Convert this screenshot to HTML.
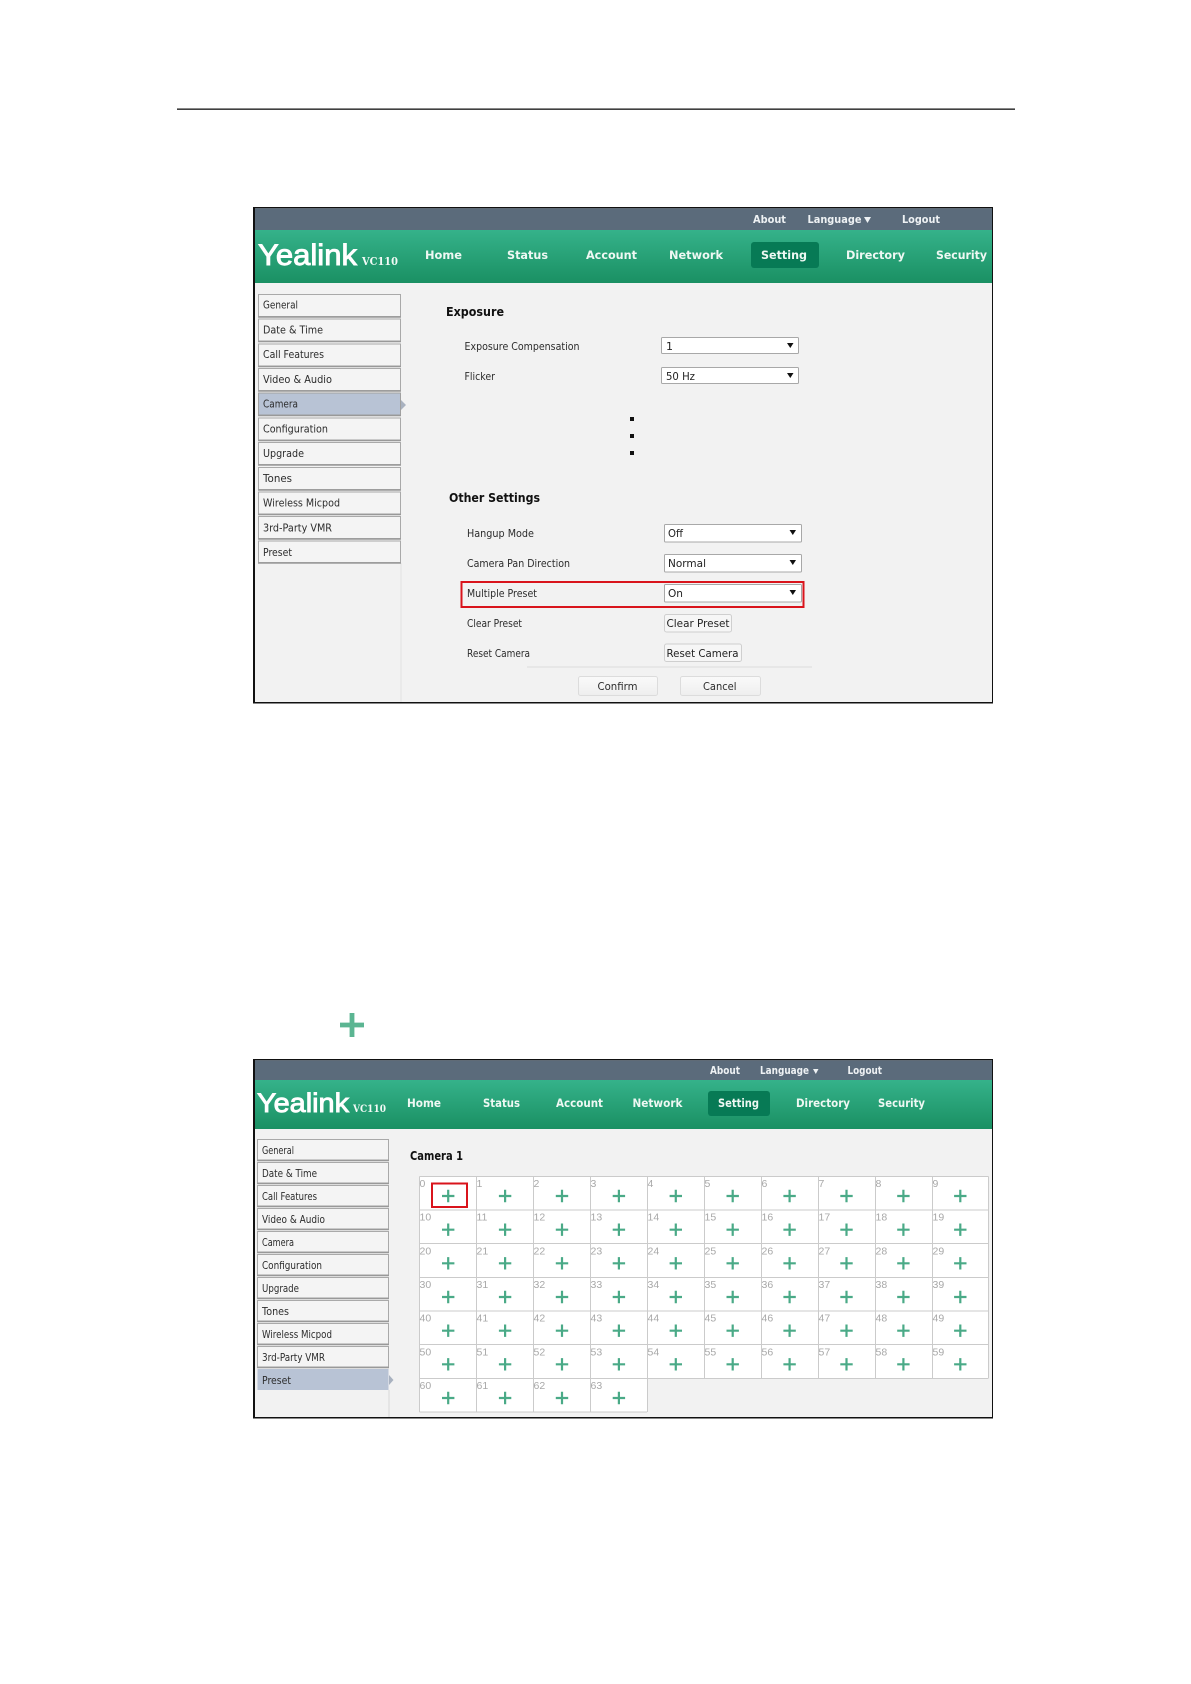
<!DOCTYPE html>
<html lang="en"><head><meta charset="utf-8"><title>Yealink VC110 Multiple Preset</title>
<style>
html,body{margin:0;padding:0;background:#fff;width:1191px;height:1684px;overflow:hidden}
svg{display:block}
text{font-family:"DejaVu Sans","Liberation Sans",sans-serif}
.m{font-size:10.5px;fill:#2c2c2c}
.h{font-size:12px;font-weight:bold;fill:#111}
.n{font-size:11.5px;font-weight:bold;fill:#eef8f3}
.t{font-size:10.5px;font-weight:bold;fill:#eef2f4}
.s{font-size:11px;fill:#222}
.g{font-family:"Liberation Sans",sans-serif;font-size:10.5px;fill:#a8a8a8}
.y{font-family:"Liberation Sans",sans-serif;fill:#fff;stroke:#fff;stroke-width:.9}
.v{font-family:"DejaVu Serif","Liberation Serif",serif;font-weight:bold;fill:#f2faf6}
.c{fill:#f4f4f4;stroke:#a9a9a9;stroke-width:1}
</style></head><body>
<svg xmlns="http://www.w3.org/2000/svg" width="1191" height="1684" viewBox="0 0 1191 1684">
<defs>
<linearGradient id="gr" x1="0" y1="0" x2="0" y2="1"><stop offset="0" stop-color="#35b28a"/><stop offset="1" stop-color="#1a9063"/></linearGradient>
<linearGradient id="bt" x1="0" y1="0" x2="0" y2="1"><stop offset="0" stop-color="#fafafa"/><stop offset="1" stop-color="#eeeeee"/></linearGradient>
<path id="p" d="M-1.1-6.200h2.200v5.100h5.100v2.200h-5.100v5.100h-2.200v-5.100h-5.100v-2.200h5.100z" fill="#4aaa87"/>
<g id="r4"><use href="#p" x="448.200"/><use href="#p" x="505.100"/><use href="#p" x="562"/><use href="#p" x="618.900"/></g>
<g id="r"><use href="#r4"/><use href="#p" x="675.800"/><use href="#p" x="732.700"/><use href="#p" x="789.600"/><use href="#p" x="846.500"/><use href="#p" x="903.400"/><use href="#p" x="960.300"/></g>
</defs>
<rect width="1191" height="1684" fill="#fff"/>
<rect x="177" y="108.500" width="838" height="1.300" fill="#111"/>

<!-- Screenshot 1 -->
<rect x="253" y="207" width="740" height="496.500" fill="#111"/>
<rect x="255" y="208.300" width="737" height="493.700" fill="#f2f2f2"/>
<rect x="255" y="208.300" width="737" height="21.700" fill="#5b6b7b"/>
<rect x="255" y="230" width="737" height="53" fill="url(#gr)"/>
<text class="y" x="258" y="265" font-size="29.500" textLength="99" lengthAdjust="spacingAndGlyphs">Yealink</text>
<text class="v" x="362" y="265" font-size="11.500" textLength="36" lengthAdjust="spacingAndGlyphs">VC110</text>
<text class="t" x="753" y="223" textLength="33" lengthAdjust="spacingAndGlyphs">About</text>
<text class="t" x="807.500" y="223" textLength="54" lengthAdjust="spacingAndGlyphs">Language</text>
<path d="M864 217h7l-3.500 6z" fill="#eef2f4"/>
<text class="t" x="902" y="223" textLength="38" lengthAdjust="spacingAndGlyphs">Logout</text>
<text class="n" x="425" y="259" textLength="37" lengthAdjust="spacingAndGlyphs">Home</text>
<text class="n" x="507" y="259" textLength="41" lengthAdjust="spacingAndGlyphs">Status</text>
<text class="n" x="586" y="259" textLength="51" lengthAdjust="spacingAndGlyphs">Account</text>
<text class="n" x="669" y="259" textLength="54" lengthAdjust="spacingAndGlyphs">Network</text>
<rect x="751" y="242" width="68" height="26" rx="3" fill="#077a55"/>
<text class="n" x="761" y="259" textLength="46" lengthAdjust="spacingAndGlyphs">Setting</text>
<text class="n" x="846" y="259" textLength="59" lengthAdjust="spacingAndGlyphs">Directory</text>
<text class="n" x="936" y="259" textLength="51" lengthAdjust="spacingAndGlyphs">Security</text>

<rect x="400.500" y="563" width="1" height="139" fill="#e2e2e2"/>
<rect class="c" x="258.500" y="294.500" width="142" height="22"/>
<rect class="c" x="258.500" y="319" width="142" height="22"/>
<rect class="c" x="258.500" y="344" width="142" height="22"/>
<rect class="c" x="258.500" y="368.500" width="142" height="22"/>
<rect x="258.500" y="393" width="142" height="22" fill="#b8c3d5" stroke="#a0a0a0"/>
<path d="M401 400l5 5-5 5z" fill="#a9b2c0"/>
<rect class="c" x="258.500" y="418" width="142" height="22"/>
<rect class="c" x="258.500" y="442.500" width="142" height="22"/>
<rect class="c" x="258.500" y="467.500" width="142" height="22"/>
<rect class="c" x="258.500" y="492" width="142" height="22"/>
<rect class="c" x="258.500" y="516.500" width="142" height="22"/>
<rect class="c" x="258.500" y="541" width="142" height="21.500"/>
<path fill="none" stroke="#999" stroke-width="1.500" d="M258 317H401M258 341.500H401M258 366.500H401M258 391H401M258 415.500H401M258 440.500H401M258 465H401M258 490H401M258 514.500H401M258 539H401M258 563H401"/>
<text class="m" x="263" y="308.700" textLength="35" lengthAdjust="spacingAndGlyphs">General</text>
<text class="m" x="263" y="333.400" textLength="60" lengthAdjust="spacingAndGlyphs">Date &amp; Time</text>
<text class="m" x="263" y="358.200" textLength="61" lengthAdjust="spacingAndGlyphs">Call Features</text>
<text class="m" x="263" y="382.900" textLength="69" lengthAdjust="spacingAndGlyphs">Video &amp; Audio</text>
<text class="m" x="263" y="407.700" textLength="35" lengthAdjust="spacingAndGlyphs">Camera</text>
<text class="m" x="263" y="432.400" textLength="65" lengthAdjust="spacingAndGlyphs">Configuration</text>
<text class="m" x="263" y="457.200" textLength="41" lengthAdjust="spacingAndGlyphs">Upgrade</text>
<text class="m" x="263" y="481.900" textLength="29" lengthAdjust="spacingAndGlyphs">Tones</text>
<text class="m" x="263" y="506.700" textLength="77" lengthAdjust="spacingAndGlyphs">Wireless Micpod</text>
<text class="m" x="263" y="531.400" textLength="69" lengthAdjust="spacingAndGlyphs">3rd-Party VMR</text>
<text class="m" x="263" y="556.200" textLength="29" lengthAdjust="spacingAndGlyphs">Preset</text>

<text class="h" x="446" y="316" textLength="58" lengthAdjust="spacingAndGlyphs">Exposure</text>
<text class="m" x="464.500" y="350" textLength="115" lengthAdjust="spacingAndGlyphs">Exposure Compensation</text>
<text class="m" x="464.500" y="380" textLength="30.500" lengthAdjust="spacingAndGlyphs">Flicker</text>
<rect x="661.500" y="337.500" width="137" height="16" rx="1" fill="#fff" stroke="#a8a8a8"/>
<text class="s" x="666" y="350">1</text>
<path d="M787 343h6.500l-3.200 5z" fill="#111"/>
<rect x="661.500" y="367.500" width="137" height="16" rx="1" fill="#fff" stroke="#a8a8a8"/>
<text class="s" x="666" y="380" textLength="29" lengthAdjust="spacingAndGlyphs">50 Hz</text>
<path d="M787 373h6.500l-3.200 5z" fill="#111"/>
<rect x="630" y="417" width="4" height="4" fill="#111"/>
<rect x="630" y="434" width="4" height="4" fill="#111"/>
<rect x="630" y="451" width="4" height="4" fill="#111"/>

<text class="h" x="449" y="502" textLength="91" lengthAdjust="spacingAndGlyphs">Other Settings</text>
<text class="m" x="467" y="537" textLength="67" lengthAdjust="spacingAndGlyphs">Hangup Mode</text>
<text class="m" x="467" y="567" textLength="103" lengthAdjust="spacingAndGlyphs">Camera Pan Direction</text>
<text class="m" x="467" y="597" textLength="70" lengthAdjust="spacingAndGlyphs">Multiple Preset</text>
<text class="m" x="467" y="627" textLength="55" lengthAdjust="spacingAndGlyphs">Clear Preset</text>
<text class="m" x="467" y="657" textLength="63" lengthAdjust="spacingAndGlyphs">Reset Camera</text>
<rect x="664.500" y="524.500" width="137" height="17.500" rx="1" fill="#fff" stroke="#a8a8a8"/>
<text class="s" x="668" y="537" textLength="15" lengthAdjust="spacingAndGlyphs">Off</text>
<path d="M789.500 530h6.500l-3.200 5z" fill="#111"/>
<rect x="664.500" y="554.500" width="137" height="17.500" rx="1" fill="#fff" stroke="#a8a8a8"/>
<text class="s" x="668" y="567" textLength="38" lengthAdjust="spacingAndGlyphs">Normal</text>
<path d="M789.500 560h6.500l-3.200 5z" fill="#111"/>
<rect x="664.500" y="584.500" width="137" height="17.500" rx="1" fill="#fff" stroke="#a8a8a8"/>
<text class="s" x="668" y="597" textLength="15" lengthAdjust="spacingAndGlyphs">On</text>
<path d="M789.500 590h6.500l-3.200 5z" fill="#111"/>
<rect x="461.500" y="582" width="342" height="25" fill="none" stroke="#d9141c" stroke-width="2"/>
<rect x="664.500" y="614.500" width="67" height="17.500" rx="2" fill="#f6f6f6" stroke="#cfcfcf"/>
<text class="s" x="666.500" y="627" textLength="63" lengthAdjust="spacingAndGlyphs">Clear Preset</text>
<rect x="664.500" y="644" width="77" height="17.500" rx="2" fill="#f6f6f6" stroke="#cfcfcf"/>
<text class="s" x="666.500" y="657" textLength="72" lengthAdjust="spacingAndGlyphs">Reset Camera</text>
<rect x="527" y="666.500" width="285" height="1" fill="#dcdcdc"/>
<rect x="578.500" y="676.500" width="79" height="19" rx="2" fill="url(#bt)" stroke="#dcdcdc"/>
<text class="m" x="597.500" y="690" textLength="40" lengthAdjust="spacingAndGlyphs">Confirm</text>
<rect x="680.500" y="676.500" width="80" height="19" rx="2" fill="url(#bt)" stroke="#dcdcdc"/>
<text class="m" x="703" y="690" textLength="33.500" lengthAdjust="spacingAndGlyphs">Cancel</text>

<!-- Standalone plus -->
<path d="M349.600 1013h4.800v9.600h9.600v4.800h-9.600v9.600h-4.800v-9.600h-9.600v-4.800h9.600z" fill="#5bb592"/>

<!-- Screenshot 2 -->
<rect x="253" y="1059" width="740" height="359.500" fill="#111"/>
<rect x="255" y="1060.300" width="737" height="356.700" fill="#f2f2f2"/>
<rect x="255" y="1060.300" width="737" height="19.700" fill="#5b6b7b"/>
<rect x="255" y="1080" width="737" height="49" fill="url(#gr)"/>
<text class="y" x="257" y="1112" font-size="27" textLength="92" lengthAdjust="spacingAndGlyphs">Yealink</text>
<text class="v" x="353" y="1112" font-size="10.500" textLength="33" lengthAdjust="spacingAndGlyphs">VC110</text>
<text class="t" x="710" y="1074" textLength="30" lengthAdjust="spacingAndGlyphs">About</text>
<text class="t" x="760" y="1074" textLength="49" lengthAdjust="spacingAndGlyphs">Language</text>
<path d="M813 1069h5.500l-2.700 5z" fill="#eef2f4"/>
<text class="t" x="847.500" y="1074" textLength="34.500" lengthAdjust="spacingAndGlyphs">Logout</text>
<text class="n" x="407" y="1107" textLength="34" lengthAdjust="spacingAndGlyphs">Home</text>
<text class="n" x="483" y="1107" textLength="37" lengthAdjust="spacingAndGlyphs">Status</text>
<text class="n" x="556" y="1107" textLength="47" lengthAdjust="spacingAndGlyphs">Account</text>
<text class="n" x="632.500" y="1107" textLength="50" lengthAdjust="spacingAndGlyphs">Network</text>
<rect x="708" y="1091" width="62" height="25" rx="3" fill="#077a55"/>
<text class="n" x="718" y="1107" textLength="41" lengthAdjust="spacingAndGlyphs">Setting</text>
<text class="n" x="796" y="1107" textLength="54" lengthAdjust="spacingAndGlyphs">Directory</text>
<text class="n" x="878" y="1107" textLength="47" lengthAdjust="spacingAndGlyphs">Security</text>

<rect x="388.500" y="1390" width="1" height="27" fill="#d8d8d8"/>
<rect class="c" x="257.500" y="1139.500" width="131" height="20.500"/>
<rect class="c" x="257.500" y="1162.500" width="131" height="20.500"/>
<rect class="c" x="257.500" y="1185.500" width="131" height="20.500"/>
<rect class="c" x="257.500" y="1208.500" width="131" height="20.500"/>
<rect class="c" x="257.500" y="1231.500" width="131" height="20.500"/>
<rect class="c" x="257.500" y="1254.500" width="131" height="20.500"/>
<rect class="c" x="257.500" y="1277.500" width="131" height="20.500"/>
<rect class="c" x="257.500" y="1300.500" width="131" height="20.500"/>
<rect class="c" x="257.500" y="1323.500" width="131" height="20.500"/>
<rect class="c" x="257.500" y="1346.500" width="131" height="20.500"/>
<path fill="none" stroke="#999" stroke-width="1.500" d="M257 1160.500H389M257 1183.500H389M257 1206.500H389M257 1229.500H389M257 1252.500H389M257 1275.500H389M257 1298.500H389M257 1321.500H389M257 1344.500H389M257 1367.500H389"/>
<rect x="257.500" y="1369" width="131" height="21" fill="#b8c3d5"/>
<path d="M389 1375l4.500 5-4.500 5z" fill="#a9b2c0"/>
<text class="m" x="262" y="1153.800" textLength="32" lengthAdjust="spacingAndGlyphs">General</text>
<text class="m" x="262" y="1176.800" textLength="55" lengthAdjust="spacingAndGlyphs">Date &amp; Time</text>
<text class="m" x="262" y="1199.800" textLength="55" lengthAdjust="spacingAndGlyphs">Call Features</text>
<text class="m" x="262" y="1222.800" textLength="63" lengthAdjust="spacingAndGlyphs">Video &amp; Audio</text>
<text class="m" x="262" y="1245.800" textLength="32" lengthAdjust="spacingAndGlyphs">Camera</text>
<text class="m" x="262" y="1268.800" textLength="60" lengthAdjust="spacingAndGlyphs">Configuration</text>
<text class="m" x="262" y="1291.800" textLength="37" lengthAdjust="spacingAndGlyphs">Upgrade</text>
<text class="m" x="262" y="1314.800" textLength="27" lengthAdjust="spacingAndGlyphs">Tones</text>
<text class="m" x="262" y="1337.800" textLength="70" lengthAdjust="spacingAndGlyphs">Wireless Micpod</text>
<text class="m" x="262" y="1360.800" textLength="63" lengthAdjust="spacingAndGlyphs">3rd-Party VMR</text>
<text class="m" x="262" y="1383.800" textLength="29" lengthAdjust="spacingAndGlyphs">Preset</text>
<text class="h" x="410" y="1160" textLength="53" lengthAdjust="spacingAndGlyphs">Camera 1</text>

<!-- Grid -->
<rect x="419.500" y="1176.500" width="569" height="202" fill="#fff"/>
<rect x="419.500" y="1378" width="227.600" height="34" fill="#fff"/>
<path fill="none" stroke="#cbcbcb" d="M419.500 1176.500H988.500M419.500 1210H988.500M419.500 1243.500H988.500M419.500 1277.500H988.500M419.500 1311H988.500M419.500 1344.500H988.500M419.500 1378.500H988.500M419.500 1412H647M419.500 1176.500V1412M476.500 1176.500V1412M533.500 1176.500V1412M590.500 1176.500V1412M647.500 1176.500V1412M704.500 1176.500V1378M761.500 1176.500V1378M818.500 1176.500V1378M875.500 1176.500V1378M932.500 1176.500V1378M988.500 1176.500V1378"/>
<use href="#r" y="1196"/><use href="#r" y="1229.700"/><use href="#r" y="1263.300"/><use href="#r" y="1297"/><use href="#r" y="1330.700"/><use href="#r" y="1364.300"/><use href="#r4" y="1398"/>
<rect x="432" y="1183.500" width="35" height="23.500" fill="none" stroke="#d9141c" stroke-width="2"/>
<g class="g">
<text class="g" x="419.500" y="1187">0</text><text class="g" x="476.500" y="1187">1</text><text class="g" x="533.500" y="1187">2</text><text class="g" x="590.500" y="1187">3</text><text class="g" x="647.500" y="1187">4</text><text class="g" x="704.500" y="1187">5</text><text class="g" x="761.500" y="1187">6</text><text class="g" x="818.500" y="1187">7</text><text class="g" x="875.500" y="1187">8</text><text class="g" x="932.500" y="1187">9</text>
<text class="g" x="419.500" y="1220.700">10</text><text class="g" x="476.500" y="1220.700">11</text><text class="g" x="533.500" y="1220.700">12</text><text class="g" x="590.500" y="1220.700">13</text><text class="g" x="647.500" y="1220.700">14</text><text class="g" x="704.500" y="1220.700">15</text><text class="g" x="761.500" y="1220.700">16</text><text class="g" x="818.500" y="1220.700">17</text><text class="g" x="875.500" y="1220.700">18</text><text class="g" x="932.500" y="1220.700">19</text>
<text class="g" x="419.500" y="1254.300">20</text><text class="g" x="476.500" y="1254.300">21</text><text class="g" x="533.500" y="1254.300">22</text><text class="g" x="590.500" y="1254.300">23</text><text class="g" x="647.500" y="1254.300">24</text><text class="g" x="704.500" y="1254.300">25</text><text class="g" x="761.500" y="1254.300">26</text><text class="g" x="818.500" y="1254.300">27</text><text class="g" x="875.500" y="1254.300">28</text><text class="g" x="932.500" y="1254.300">29</text>
<text class="g" x="419.500" y="1288">30</text><text class="g" x="476.500" y="1288">31</text><text class="g" x="533.500" y="1288">32</text><text class="g" x="590.500" y="1288">33</text><text class="g" x="647.500" y="1288">34</text><text class="g" x="704.500" y="1288">35</text><text class="g" x="761.500" y="1288">36</text><text class="g" x="818.500" y="1288">37</text><text class="g" x="875.500" y="1288">38</text><text class="g" x="932.500" y="1288">39</text>
<text class="g" x="419.500" y="1321.700">40</text><text class="g" x="476.500" y="1321.700">41</text><text class="g" x="533.500" y="1321.700">42</text><text class="g" x="590.500" y="1321.700">43</text><text class="g" x="647.500" y="1321.700">44</text><text class="g" x="704.500" y="1321.700">45</text><text class="g" x="761.500" y="1321.700">46</text><text class="g" x="818.500" y="1321.700">47</text><text class="g" x="875.500" y="1321.700">48</text><text class="g" x="932.500" y="1321.700">49</text>
<text class="g" x="419.500" y="1355.300">50</text><text class="g" x="476.500" y="1355.300">51</text><text class="g" x="533.500" y="1355.300">52</text><text class="g" x="590.500" y="1355.300">53</text><text class="g" x="647.500" y="1355.300">54</text><text class="g" x="704.500" y="1355.300">55</text><text class="g" x="761.500" y="1355.300">56</text><text class="g" x="818.500" y="1355.300">57</text><text class="g" x="875.500" y="1355.300">58</text><text class="g" x="932.500" y="1355.300">59</text>
<text class="g" x="419.500" y="1389">60</text><text class="g" x="476.500" y="1389">61</text><text class="g" x="533.500" y="1389">62</text><text class="g" x="590.500" y="1389">63</text>
</g>
</svg>
</body></html>
